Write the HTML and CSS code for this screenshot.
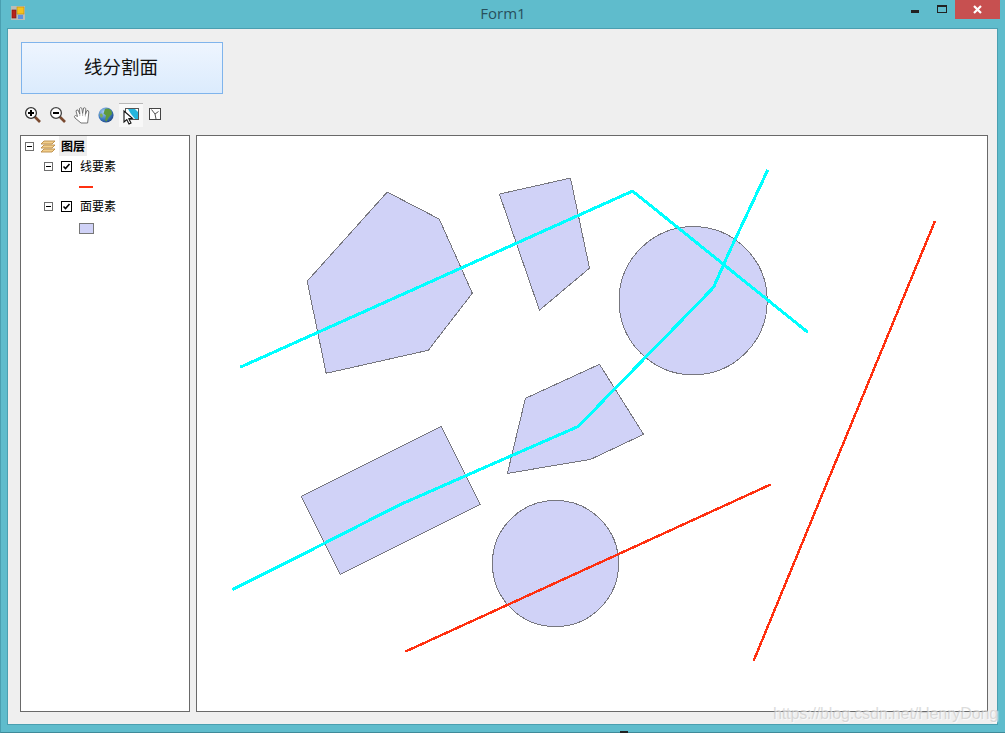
FILE: index.html
```html
<!DOCTYPE html>
<html lang="zh-CN">
<head>
  <meta charset="UTF-8">
  <meta name="viewport" content="width=device-width, initial-scale=1.0">
  <title>Form1</title>
  <link rel="stylesheet" href="styles.css">
</head>
<body>
  <div class="window">
    <div class="titlebar">
      <svg class="app-icon" width="14" height="14" viewBox="0 0 14 14">
        <rect x="0" y="0" width="14" height="14" fill="#b9bdb8"/>
        <rect x="6" y="1" width="7" height="7" fill="#f6c21c" stroke="#b98a10" stroke-width="0.6"/>
        <rect x="1" y="4" width="4" height="8" fill="#b8221c" stroke="#7a1410" stroke-width="0.6"/>
        <rect x="7" y="9" width="5" height="4" fill="#5f93e0"/>
      </svg>
      <div class="title">Form1</div>
      <div class="win-min"></div>
      <div class="win-max"></div>
      <div class="win-close">
        <svg width="9" height="9" viewBox="0 0 9 9"><path d="M1 1 L8 8 M8 1 L1 8" stroke="#fff" stroke-width="2.2"/></svg>
      </div>
    </div>

    <div class="client">
      <button class="split-button">线分割面</button>

      <div class="toolbar">
        <div class="tool">
          <svg width="18" height="18" viewBox="0 0 18 18">
            <path d="M10.5 10.5 L16 16" stroke="#7a4a30" stroke-width="2.6"/>
            <circle cx="7" cy="7" r="5.4" fill="#fff" stroke="#333" stroke-width="1.3"/>
            <path d="M4 7 H10 M7 4 V10" stroke="#000" stroke-width="2"/>
          </svg>
        </div>
        <div class="tool">
          <svg width="18" height="18" viewBox="0 0 18 18">
            <path d="M10.5 10.5 L16 16" stroke="#7a4a30" stroke-width="2.6"/>
            <circle cx="7" cy="7" r="5.4" fill="#fff" stroke="#444" stroke-width="1.3"/>
            <path d="M4 7 H10" stroke="#000" stroke-width="2"/>
          </svg>
        </div>
        <div class="tool">
          <svg width="18" height="18" viewBox="0 0 18 18">
            <path d="M8 17 L2 12 Q0.5 10 2.5 9.5 L4.5 10.5 L3 5 Q3.5 3.5 5 4 L6.8 8 L6.5 2.5 Q7.5 1 8.8 2.2 L9.6 7.5 L10.6 2 Q12 1.2 12.8 2.6 L12.4 8.5 L14 4.5 Q15.6 4.2 15.8 6 L15.2 12 L14.6 17 Z" fill="#fff" stroke="#666" stroke-width="0.9"/>
            <path d="M6.8 8 V10 M9.6 7.5 V10 M12.4 8.5 V10.5" stroke="#999" stroke-width="0.7"/>
          </svg>
        </div>
        <div class="tool">
          <svg width="18" height="18" viewBox="0 0 18 18">
            <defs>
              <radialGradient id="sea" cx="0.35" cy="0.3" r="0.8">
                <stop offset="0" stop-color="#a9cdf2"/>
                <stop offset="0.6" stop-color="#3a78c0"/>
                <stop offset="1" stop-color="#1c3f78"/>
              </radialGradient>
            </defs>
            <circle cx="9" cy="9" r="7.6" fill="url(#sea)"/>
            <path d="M8 3 Q12 1.6 14.5 5 L15 8 L12 11 L9.5 15.5 Q7.5 15 8.5 12 L9 9.5 L6.5 7.5 Z" fill="#5f9a3c"/>
            <path d="M2.4 8 L5 7.5 L6 10 L4 12 Z" fill="#7fae55"/>
          </svg>
        </div>
        <div class="tool tool-active">
          <svg width="18" height="18" viewBox="0 0 18 18">
            <rect x="3.5" y="1.5" width="13" height="11" fill="#fff" stroke="#555"/>
            <path d="M6 2 H13 L16 5 V12 H13 L9 7 Z" fill="#25b5dd"/>
            <path d="M2 4 L2 15 L4.8 12.6 L7 17 L9 16 L6.8 11.8 L10.4 11.4 Z" fill="#fff" stroke="#111" stroke-width="1.1"/>
          </svg>
        </div>
        <div class="tool">
          <svg width="18" height="18" viewBox="0 0 18 18">
            <rect x="3.5" y="2.5" width="11" height="11" fill="#fff" stroke="#444"/>
            <path d="M5.5 3.5 L9 8 L12.5 5.5 M9 8 L10 13" fill="none" stroke="#555"/>
          </svg>
        </div>
      </div>

      <div class="panels">
        <div class="toc">
          <div class="toc-row">
            <span class="expander"></span>
            <svg class="layers-icon" width="16" height="13" viewBox="0 0 16 13">
              <path d="M4 1 H15 L12 4 H1 Z M4 5 H15 L12 8 H1 Z M4 9 H15 L12 12 H1 Z" fill="#f3cf8c" stroke="#b98a45" stroke-width="0.9"/>
            </svg>
            <span class="toc-root">图层</span>
          </div>
          <div class="toc-row toc-layer">
            <span class="expander"></span>
            <svg class="check" width="11" height="11" viewBox="0 0 11 11"><rect x="0.5" y="0.5" width="10" height="10" fill="#fff" stroke="#000"/><path d="M2.5 5.5 L4.5 7.5 L8.5 3" fill="none" stroke="#000" stroke-width="1.6"/></svg>
            <span class="toc-label">线要素</span>
          </div>
          <div class="toc-row toc-legend">
            <span class="legend-line"></span>
          </div>
          <div class="toc-row toc-layer">
            <span class="expander"></span>
            <svg class="check" width="11" height="11" viewBox="0 0 11 11"><rect x="0.5" y="0.5" width="10" height="10" fill="#fff" stroke="#000"/><path d="M2.5 5.5 L4.5 7.5 L8.5 3" fill="none" stroke="#000" stroke-width="1.6"/></svg>
            <span class="toc-label">面要素</span>
          </div>
          <div class="toc-row toc-legend toc-legend-fill">
            <span class="legend-fill"></span>
          </div>
        </div>

        <div class="map">
          <svg class="map-canvas" viewBox="197 136 789 574" shape-rendering="crispEdges">
            <g class="polys">
              <polygon points="387,192 439,219 472,293 428,350 326,373 307,281"/>
              <polygon points="499,194 570,178 589,268 539,310"/>
              <polygon points="525,398 599,364 643,434 590,459 507,473"/>
              <polygon points="301,496 441,426 480,504 340,574"/>
              <circle cx="692.5" cy="300.5" r="74"/>
              <circle cx="555" cy="563" r="63"/>
            </g>
            <g class="cyan">
              <polyline points="240,367 632,191 807,332"/>
              <polyline points="232,589 312,549 398,505 482,468 578,426 605,398 684,317 713,287 728,253 767,170"/>
            </g>
            <g class="red">
              <line x1="405" y1="651" x2="770" y2="484"/>
              <line x1="753" y1="660" x2="934" y2="221"/>
            </g>
          </svg>
        </div>
      </div>
    </div>
  </div>
  <div class="watermark">https://blog.csdn.net/HenryDong</div>
  <div class="task-mark"></div>
</body>
</html>
```

FILE: styles.css
```css
html, body {
  margin: 0;
  height: 100%;
  overflow: hidden;
}
body {
  position: relative;
  background-color: #5fbccc;
  font-family: "Noto Sans CJK SC", "Liberation Sans", sans-serif;
}
.window {
  box-sizing: border-box;
  width: 1005px;
  height: 733px;
  padding: 0 7px 8px 6px;
  display: flex;
  flex-direction: column;
  border-left: 1px solid #4a9fb0;
  border-bottom: 1px solid #3f8a99;
}
.titlebar {
  height: 28px;
  flex-shrink: 0;
  display: flex;
  align-items: flex-start;
  margin: 0 -7px 0 -6px;
  position: relative;
}
.app-icon {
  margin: 6px 0 0 10px;
}
.title {
  position: absolute;
  left: 0;
  right: 0;
  top: 3px;
  text-align: center;
  font-family: "Open Sans", "Liberation Sans", sans-serif;
  font-size: 15px;
  line-height: 20px;
  color: #28505c;
}
.win-min {
  position: absolute;
  left: 910px;
  top: 10px;
  width: 8px;
  height: 3px;
  background-color: #222;
}
.win-max {
  position: absolute;
  left: 936px;
  top: 5px;
  width: 8px;
  height: 5px;
  border: 1px solid #222;
  border-top-width: 2px;
}
.win-close {
  position: absolute;
  left: 954px;
  top: 0;
  width: 45px;
  height: 19px;
  background-color: #c75050;
  display: flex;
  align-items: center;
  justify-content: center;
}
.client {
  flex: 1;
  box-sizing: border-box;
  width: 991px;
  background-color: #efefef;
  border: 1px solid #4a9fb0;
  padding: 13px 9px 12px 12px;
  display: flex;
  flex-direction: column;
}
.split-button {
  width: 202px;
  height: 52px;
  margin: 0 0 0 1px;
  padding: 0 2px 4px 0;
  border: 1px solid #7fb4ec;
  background: linear-gradient(#eef5fe, #dbebfd);
  font-family: "Noto Sans CJK SC", sans-serif;
  font-size: 18.5px;
  color: #111;
}
.toolbar {
  display: flex;
  height: 41px;
  padding-left: 1px;
  align-items: flex-start;
}
.tool {
  width: 24.4px;
  height: 24px;
  margin-top: 9px;
  display: flex;
  justify-content: center;
  align-items: center;
}
.tool-active {
  box-sizing: border-box;
  background-color: #f8f8f8;
  border-top: 1px solid #b8b8b8;
}
.panels {
  flex: 1;
  display: flex;
  gap: 6px;
  min-height: 0;
}
.toc {
  box-sizing: border-box;
  width: 170px;
  background-color: #fff;
  border: 1px solid #696969;
  font-size: 12px;
  color: #000;
}
.toc-row {
  display: flex;
  align-items: center;
  height: 20px;
  padding-left: 4px;
}
.toc-layer {
  padding-left: 23px;
}
.toc-legend {
  padding-left: 58px;
}
.toc-legend-fill {
  height: 24px;
}
.expander {
  box-sizing: border-box;
  position: relative;
  width: 9px;
  height: 9px;
  border: 1px solid #6e6e6e;
  background-color: #fff;
}
.expander::after {
  content: "";
  position: absolute;
  left: 1px;
  top: 3px;
  width: 5px;
  height: 1px;
  background-color: #000;
}
.layers-icon {
  margin-left: 6px;
}
.toc-root {
  margin-left: 3px;
  padding: 0 2px;
  height: 20px;
  line-height: 20px;
  font-weight: bold;
  background-color: #eeeeee;
}
.check {
  margin-left: 8px;
}
.toc-label {
  margin-left: 8px;
  line-height: 20px;
}
.legend-line {
  width: 14px;
  height: 2px;
  margin-top: 2px;
  background-color: #ff3010;
}
.legend-fill {
  box-sizing: border-box;
  width: 15px;
  height: 11px;
  background-color: #d0d2f7;
  border: 1px solid #777;
}
.map {
  flex: 1;
  box-sizing: border-box;
  background-color: #fff;
  border: 1px solid #696969;
  min-width: 0;
}
.map-canvas {
  display: block;
  width: 100%;
  height: 100%;
}
.polys polygon, .polys circle {
  fill: #d0d2f7;
  stroke: #77777f;
  stroke-width: 1;
}
.cyan polyline {
  fill: none;
  stroke: #00ffff;
  stroke-width: 3;
  stroke-linejoin: round;
}
.red line {
  stroke: #ff3010;
  stroke-width: 2.4;
}
.watermark {
  position: absolute;
  left: 773px;
  top: 702px;
  font-family: "Liberation Sans", Arial, sans-serif;
  font-size: 16.2px;
  letter-spacing: -0.2px;
  line-height: 22px;
  white-space: nowrap;
  color: rgba(190, 190, 190, 0.55);
  text-shadow: 1px 1px 1px rgba(255, 255, 255, 0.7);
}
.task-mark {
  position: absolute;
  left: 620px;
  top: 731px;
  width: 8px;
  height: 2px;
  background-color: #222;
}
```
